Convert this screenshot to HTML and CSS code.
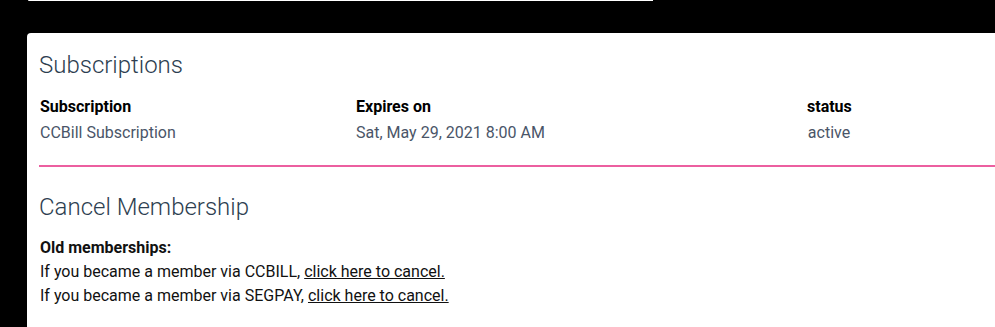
FILE: index.html
```html
<!DOCTYPE html>
<html>
<head>
<meta charset="utf-8">
<link rel="stylesheet" href="styles.css">
</head>
<body>
<div class="page">
  <div class="topbar"></div>
  <div class="card">
    <section class="subs">
      <h2 class="title">Subscriptions</h2>
      <div class="table">
        <div class="th">Subscription</div>
        <div class="th">Expires on</div>
        <div class="th status">status</div>
        <div class="td">CCBill Subscription</div>
        <div class="td">Sat, May 29, 2021 8:00 AM</div>
        <div class="td status">active</div>
      </div>
    </section>
    <hr class="divider">
    <section class="cancel">
      <h2 class="title">Cancel Membership</h2>
      <p class="info">
        <strong>Old memberships:</strong><br>
        If you became a member via CCBILL, <a href="#">click here to cancel.</a><br>
        If you became a member via SEGPAY, <a href="#">click here to cancel.</a>
      </p>
    </section>
  </div>
</div>
</body>
</html>
```
FILE: styles.css
```css
html, body {
  margin: 0;
  padding: 0;
  background: #000;
  overflow: hidden;
  font-family: Roboto, "Liberation Sans", sans-serif;
}
.page {
  width: 995px;
  height: 327px;
  overflow: hidden;
}
.topbar {
  margin-left: 28px;
  width: 625px;
  height: 1px;
  background: #fff;
  border-bottom-left-radius: 2px;
}
.card {
  margin-top: 32px;
  margin-left: 27px;
  width: 1000px;
  height: 294px;
  background: #fff;
  border-top-left-radius: 4px;
  padding: 16px 0 0 12px;
  box-sizing: border-box;
}
.title {
  margin: 0;
  font-size: 24px;
  font-weight: 300;
  color: #2d3e50;
  line-height: 32px;
}
.table {
  display: grid;
  grid-template-columns: 316px 451px 44px;
  margin-top: 14px;
  margin-left: 1px;
  row-gap: 2px;
}
.th {
  font-weight: 700;
  font-size: 16px;
  color: #000;
  line-height: 24px;
}
.td {
  font-size: 16px;
  color: #4a5568;
  line-height: 24px;
}
.status {
  text-align: center;
  white-space: nowrap;
}
.divider {
  margin: 20px 0 0 0;
  border: 0;
  height: 2px;
  background: #ec5fa0;
}
.cancel {
  padding-top: 24px;
}
.info {
  margin: 13px 0 0 1px;
  font-size: 16px;
  line-height: 24px;
  color: #111;
}
.info a {
  color: #111;
  text-decoration: underline;
}
```
